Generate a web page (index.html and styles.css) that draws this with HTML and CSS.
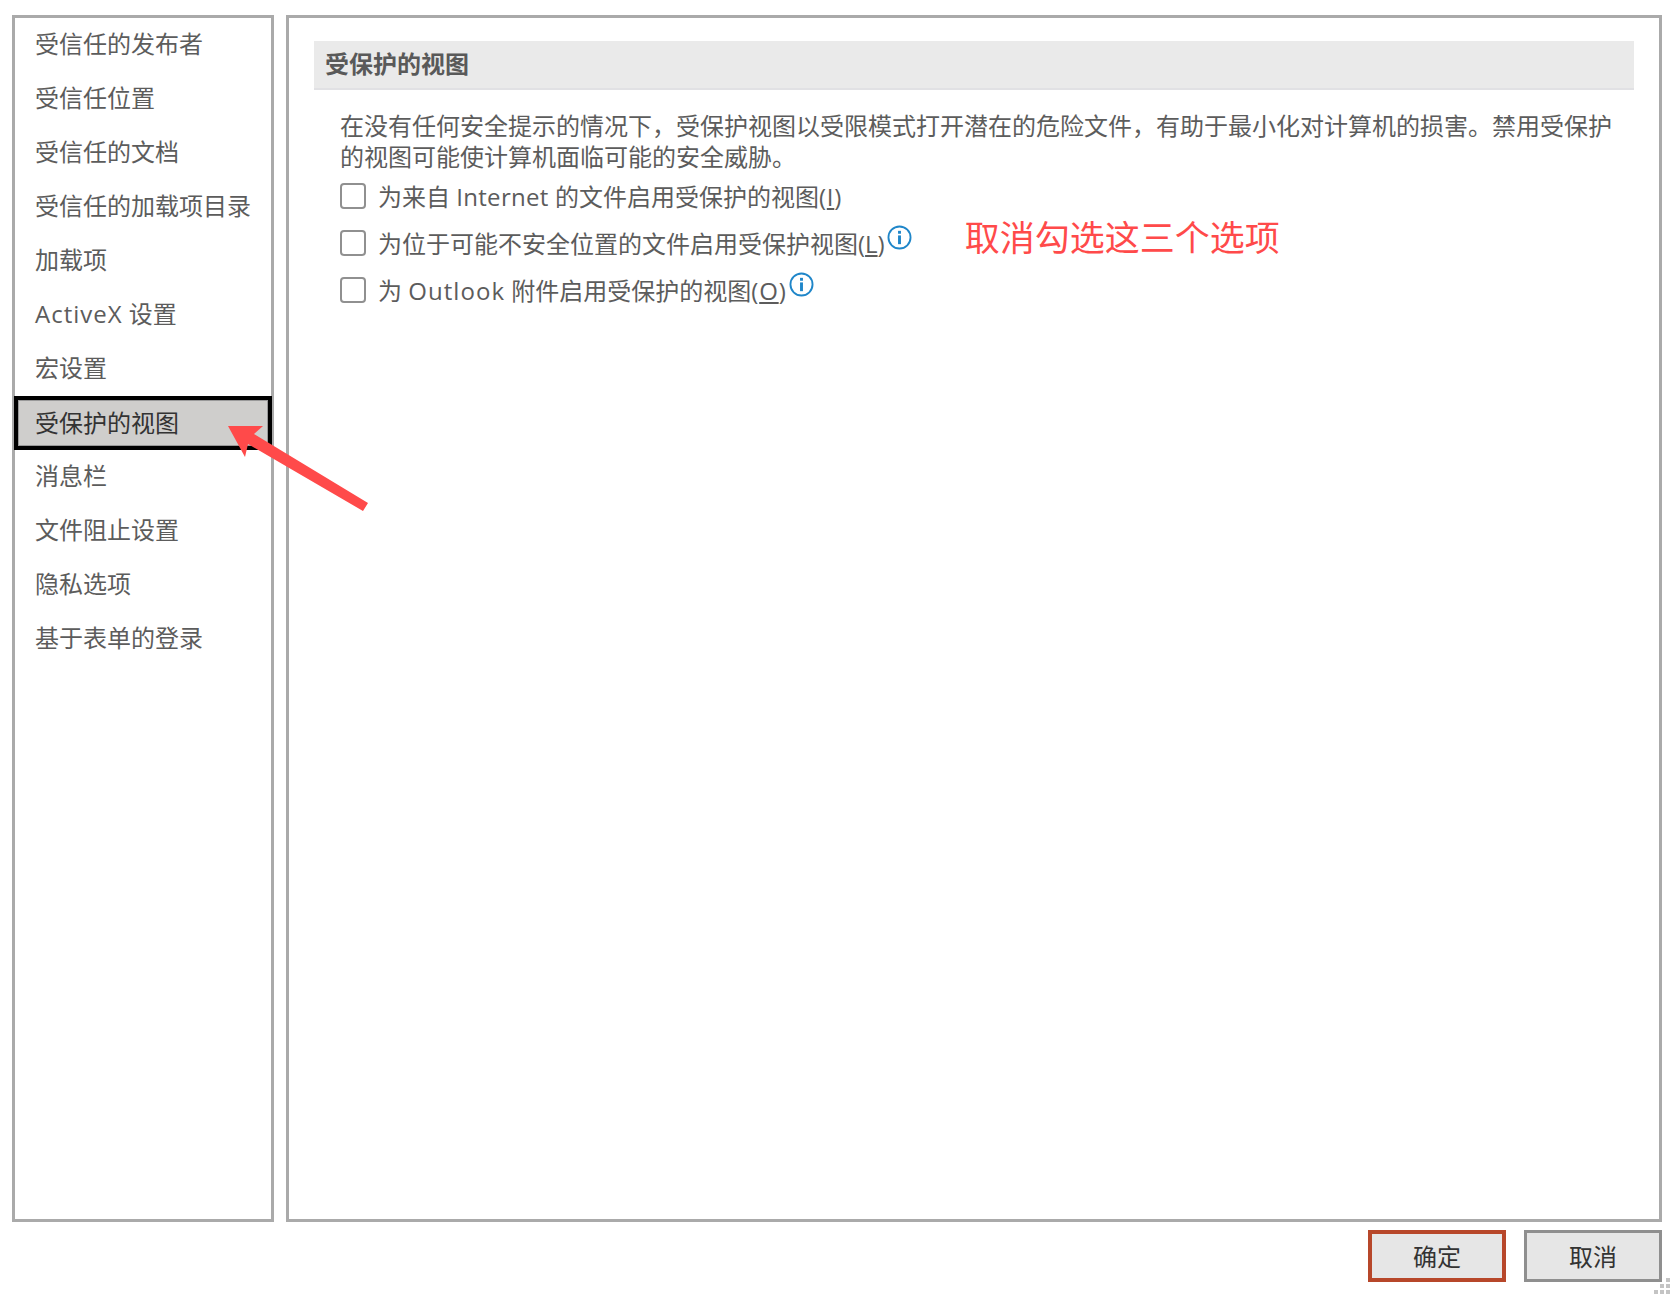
FILE: index.html

```html
<!DOCTYPE html>
<html lang="zh-CN">
<head>
<meta charset="UTF-8" />
<meta name="viewport" content="width=device-width, initial-scale=1" />
<title>信任中心</title>
<link rel="stylesheet" href="styles.css">
</head>
<body>
  <div class="dialog">
    <div class="panels">
      <ul class="side-nav">
        <li>受信任的发布者</li>
        <li>受信任位置</li>
        <li>受信任的文档</li>
        <li>受信任的加载项目录</li>
        <li>加载项</li>
        <li><span class="word-activex">ActiveX</span> 设置</li>
        <li>宏设置</li>
        <li class="selected">受保护的视图</li>
        <li>消息栏</li>
        <li>文件阻止设置</li>
        <li>隐私选项</li>
        <li>基于表单的登录</li>
      </ul>
      <div class="content">
        <h2 class="section-title">受保护的视图</h2>
        <p class="desc">在没有任何安全提示的情况下，受保护视图以受限模式打开潜在的危险文件，有助于最小化对计算机的损害。禁用受保护的视图可能使计算机面临可能的安全威胁。</p>
        <div class="option">
          <span class="check"></span>
          <span>为来自 <span class="word-internet">Internet</span> 的文件启用受保护的视图<span class="key">(<u>I</u>)</span></span>
        </div>
        <div class="option">
          <span class="check"></span>
          <span>为位于可能不安全位置的文件启用受保护视图(<u>L</u>)</span>
          <svg class="info" viewBox="0 0 24 24"><circle cx="12" cy="12" r="10.6"/><rect x="10.6" y="5.6" width="2.8" height="2.8"/><rect x="10.6" y="10" width="2.8" height="8.4"/></svg>
          <span class="note">取消勾选这三个选项</span>
        </div>
        <div class="option">
          <span class="check"></span>
          <span>为 <span class="word-outlook">Outlook</span> 附件启用受保护的视图<span class="key">(<u>O</u>)</span></span>
          <svg class="info" viewBox="0 0 24 24"><circle cx="12" cy="12" r="10.6"/><rect x="10.6" y="5.6" width="2.8" height="2.8"/><rect x="10.6" y="10" width="2.8" height="8.4"/></svg>
        </div>
      </div>
    </div>
    <div class="actions">
      <button class="btn btn-ok">确定</button>
      <button class="btn">取消</button>
    </div>
  </div>

  <!-- annotation arrow -->
  <svg class="arrow" viewBox="0 0 150 100" width="150" height="100">
    <polygon points="8,6 43,6 34,14 148,83 143,91 28,24 25,37"/>
  </svg>

  <div class="grip">
    <i></i><i></i><i></i><i></i><i></i><i></i>
  </div>
</body>
</html>
```

FILE: styles.css

```css
* {
  box-sizing: border-box;
}
html, body {
  height: 100%;
}
body {
  margin: 0;
  background: #fff;
  color: #5c5c5c;
  font-family: "Open Sans", "Noto Sans CJK SC", sans-serif;
  font-size: 24px;
  position: relative;
  overflow: hidden;
}
.dialog {
  height: 1298px;
  padding: 15px 12px 16px;
  display: flex;
  flex-direction: column;
}
.panels {
  display: flex;
  gap: 12px;
  height: 1207px;
}
.side-nav {
  width: 262px;
  flex-shrink: 0;
  margin: 0;
  padding: 0;
  list-style: none;
  border: 3px solid #aaa;
}
.side-nav li {
  height: 54px;
  line-height: 51px;
  padding-left: 20px;
  white-space: nowrap;
}
.side-nav li.selected {
  margin: 0 -1px;
  padding-left: 17px;
  background: #cfcecc;
  color: #333;
  border: 4px solid #000;
  outline: 1px solid #999;
  outline-offset: -5px;
  line-height: 45px;
}
.word-activex {
  letter-spacing: 1px;
}
.word-internet {
  letter-spacing: 0.3px;
}
.word-outlook {
  letter-spacing: 1.05px;
}
.key {
  letter-spacing: 0.8px;
}
.content {
  flex: 1;
  border: 3px solid #aaa;
  padding: 23px 25px;
}
.section-title {
  margin: 0;
  height: 49px;
  line-height: 45px;
  padding-left: 11px;
  font-size: 24px;
  font-weight: 700;
  color: #595959;
  background: #eaeaea;
  border-bottom: 2px solid #e1e1e4;
}
.desc {
  margin: 20px 0 0 26px;
  line-height: 31px;
  color: #5c5c5c;
}
.option {
  display: flex;
  align-items: center;
  height: 47px;
  margin-left: 26px;
  white-space: nowrap;
}
.check {
  width: 26px;
  height: 26px;
  margin-right: 12px;
  border: 2px solid #909090;
  border-radius: 4px;
  background: #fff;
}
.info {
  width: 25px;
  height: 25px;
  margin: -10px 0 0 2px;
}
.info circle {
  fill: none;
  stroke: #1f86c9;
  stroke-width: 1.8;
}
.info rect {
  fill: #1f86c9;
}
.note {
  margin: -15px 0 0 53px;
  font-size: 35px;
  color: #ff4a4a;
}
.actions {
  display: flex;
  justify-content: flex-end;
  gap: 18px;
  margin-top: 8px;
}
.btn {
  width: 138px;
  height: 52px;
  padding: 0 0 2px;
  background: #e6e6e6;
  border: 3px solid #8f8f8f;
  color: #333;
  font-family: inherit;
  font-size: 24px;
}
.btn-ok {
  border: 4px solid #b7472a;
}
.arrow {
  position: absolute;
  left: 220px;
  top: 420px;
}
.arrow polygon {
  fill: #ff4a4a;
}
.grip {
  position: absolute;
  right: 4px;
  bottom: 4px;
  display: grid;
  grid-template-columns: repeat(3, 4px);
  grid-template-rows: repeat(3, 4px);
  gap: 2px;
}
.grip i {
  background: #c4c4c4;
}
.grip i:nth-child(1) {
  grid-area: 1 / 3;
}
.grip i:nth-child(2) {
  grid-area: 2 / 2;
}
.grip i:nth-child(3) {
  grid-area: 2 / 3;
}
.grip i:nth-child(4) {
  grid-area: 3 / 1;
}
.grip i:nth-child(5) {
  grid-area: 3 / 2;
}
.grip i:nth-child(6) {
  grid-area: 3 / 3;
}
```
